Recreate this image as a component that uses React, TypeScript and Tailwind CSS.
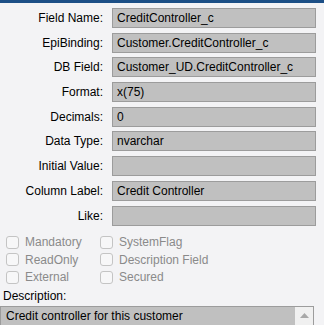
const fields: [string, string][] = [
  ['Field Name:', 'CreditController_c'],
  ['EpiBinding:', 'Customer.CreditController_c'],
  ['DB Field:', 'Customer_UD.CreditController_c'],
  ['Format:', 'x(75)'],
  ['Decimals:', '0'],
  ['Data Type:', 'nvarchar'],
  ['Initial Value:', ''],
  ['Column Label:', 'Credit Controller'],
  ['Like:', ''],
];

function Check({ label }: { label: string }) {
  return (
    <div className="flex h-[17.5px] items-center gap-[6px]">
      <span className="h-[13px] w-[13px] rounded-[3px] border border-[#c4c4c4] bg-[#f7f7f8]" />
      <span className="text-[#8a8a8a]">{label}</span>
    </div>
  );
}

export default function App() {
  return (
    <div
      className="h-[325px] w-[324px] overflow-hidden border-t-[3px] border-[#1c4f86] bg-[#f3f3f5] text-[12px] leading-[14px] text-black"
      style={{ fontFamily: '"Liberation Sans", Arial, sans-serif' }}
    >
      <div className="flex flex-col gap-[4.7px] pr-[8px] pt-[5px]">
        {fields.map(([label, value]) => (
          <div key={label} className="flex h-[20px] items-center">
            <div className="w-[103px] shrink-0 text-right">{label}</div>
            <div className="ml-[9px] flex h-[20px] flex-1 items-center border border-[#9c9c9c] bg-[#c0c0c0] px-[4px]">
              {value}
            </div>
          </div>
        ))}
      </div>
      <div className="mt-[8px] flex pl-[6px]">
        <div className="flex w-[94px] flex-col">
          <Check label="Mandatory" />
          <Check label="ReadOnly" />
          <Check label="External" />
        </div>
        <div className="flex flex-col">
          <Check label="SystemFlag" />
          <Check label="Description Field" />
          <Check label="Secured" />
        </div>
      </div>
      <div className="mt-[3px] pl-[3px]">Description:</div>
      <div className="mt-[3px] flex h-[24px] w-[314px] border border-[#9c9c9c] bg-[#c0c0c0]">
        <div className="flex-1 px-[5px] pt-[2px]">Credit controller for this customer</div>
        <div className="flex w-[18px] justify-center bg-[#f0f0f0] pt-[6px]">
          <svg width="9" height="5" viewBox="0 0 9 5">
            <path d="M0 5 L4.5 0 L9 5 Z" fill="#a8a8a8" />
          </svg>
        </div>
      </div>
    </div>
  );
}
